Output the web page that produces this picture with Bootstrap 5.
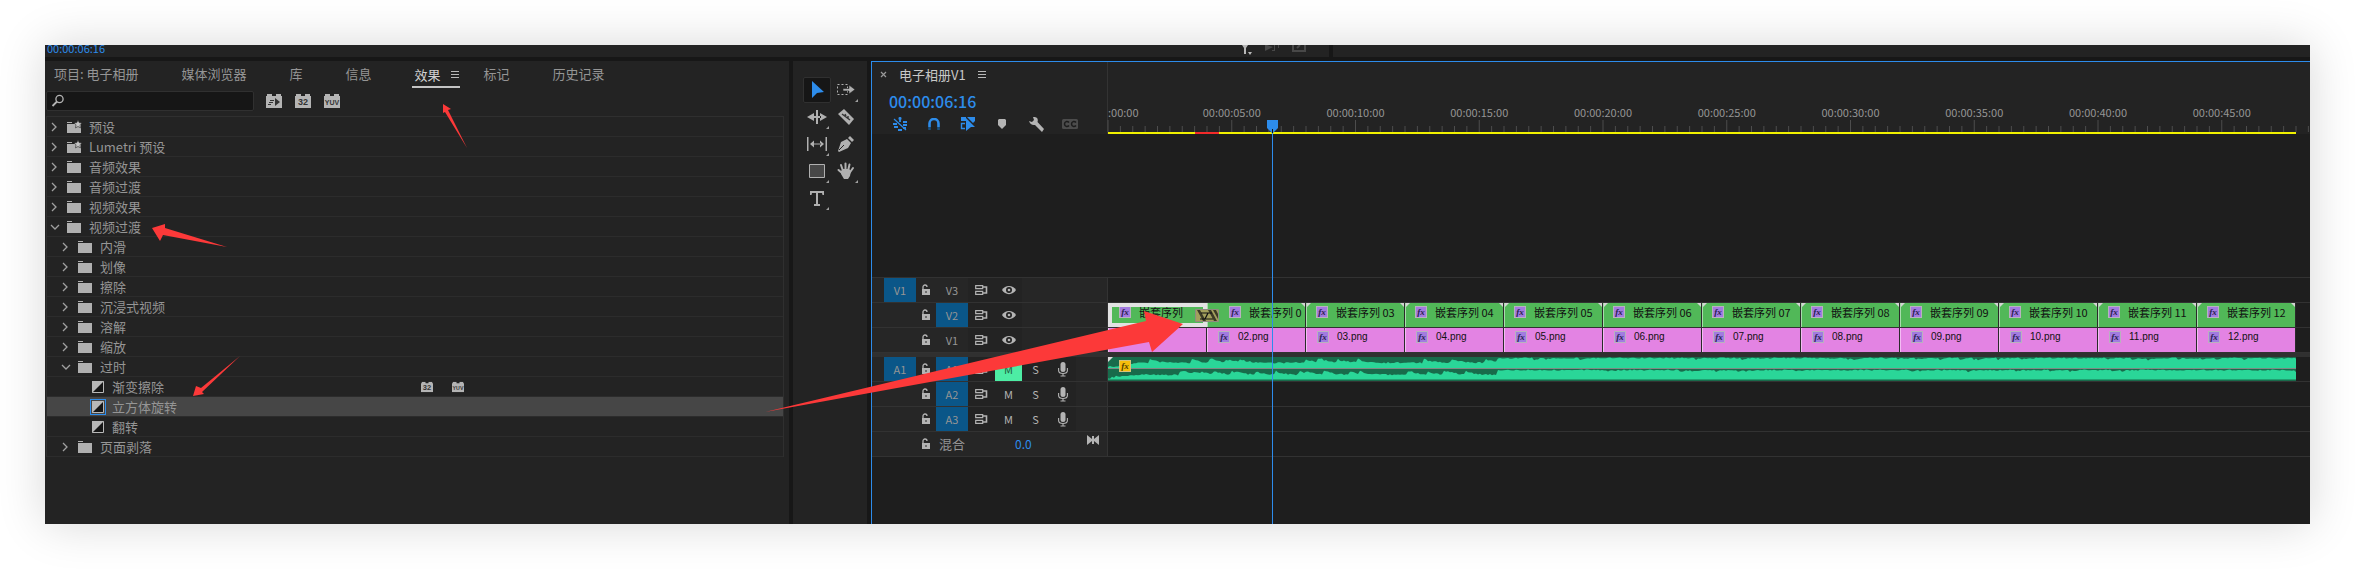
<!DOCTYPE html>
<html lang="zh-CN">
<head>
<meta charset="utf-8">
<meta name="viewport" content="width=device-width, initial-scale=1">
<title>电子相册V1</title>
<link href="https://cdn.jsdelivr.net/npm/bootstrap@5.3.0/dist/css/bootstrap.min.css" rel="stylesheet">
<style>
:root{--panel:#232323;--gap:#171717;--ink:#959595;--ico:#b0b0b0;--blue:#2d8ceb}
body{background:#fff;padding:45px;font-family:"Noto Sans CJK SC",sans-serif;font-size:13px;line-height:20px;color:var(--ink);font-weight:400}
button{background:none;border:0;padding:0;color:inherit;font:inherit;display:flex;align-items:center;justify-content:center}
a{color:inherit;text-decoration:none}
svg{display:block;flex:none}
.frame{background:var(--gap);min-height:calc(100vh - 90px);box-shadow:0 0 45px rgba(0,0,0,.16);position:relative}
.strip{height:12px;margin-bottom:4px;background:var(--panel)}
.strip-left{width:1282px}
.strip-time{color:var(--blue);font-size:11px;line-height:12px;padding-left:2px;margin-top:-3px}
.strip-icons{color:var(--ico)}
.strip-gap{width:4px;margin-left:2px;background:var(--gap)}
.work{gap:4px}
.pane{background:var(--panel)}
.effects{width:744px}
.tools{width:74px;padding:16px 10px}
.seq{border:solid var(--blue);border-width:1px 0 0 1px;background:#1e1e1e;min-width:0}
.tabs{height:30px;padding:2px 0 0 9px}
.tabs a{margin-right:43px;height:25px;line-height:22px}
.tabs a.on{color:#d0d0d0;border-bottom:2px solid #c4c4c4;margin-right:24px;padding:0 0 0 3px;margin-left:-3px}
.find{width:208px;height:20px;margin-left:1px;background:#161616;border:1px solid #303030;border-radius:2px;position:relative}
.find input{width:100%;height:18px;background:none;border:0;padding:0 8px 0 24px;color:#ccc;font-size:12px;outline:0}
.find svg{position:absolute;left:4px;top:2px}
.tree{margin:5px 5px 0 1px;border:solid #2f2f2f;border-width:1px 1px 0 1px}
.tree-row{height:20px;border-bottom:1px solid #2c2c2c;padding-left:3px}
.tree-row.picked{background:#464646}
.tree-row.l1{padding-left:14px}
.tree-row.l2{padding-left:43px}
.tree-row .nm{margin-left:7px;line-height:19px}
.tree-row .fx-name{width:309px;margin-left:6px;line-height:19px}
.fxi{padding:1px;border:1px solid transparent}
.picked .fxi{border-color:var(--blue)}
.tool-grid{display:grid;grid-template-columns:28px 28px;grid-auto-rows:27px;column-gap:1px}
.tool-grid button{position:relative;height:26px;color:var(--ico)}
.tool-grid button.on{background:#161616;border:1px solid #303030;border-radius:2px;color:var(--blue)}
.more::after{content:"";position:absolute;right:2px;bottom:1px;border:solid transparent;border-width:0 0 3px 3px;border-bottom-color:#a0a0a0}
.seq-head{background:var(--panel);height:72px}
.side{width:235px;flex:none}
.seq-name{color:#c8c8c8;height:25px;padding-left:8px}
.clock{color:var(--blue);font-size:16px;line-height:24px;padding-left:17px;font-weight:500;margin-top:2px}
.opts{padding-left:11px;margin-top:1px}
.opts button{width:34px;height:20px}
.ruler,.lane{flex:1 1 0;min-width:0;border-left:1px solid #333}
.span-all{width:calc(100% - 14px);position:relative}
.marks{padding-top:43px;font-size:11px;line-height:15px}
.marks span{width:10.4167%;text-align:center}
.marks span:first-child{width:5.2083%;text-align:left}
.bar{height:2px;background:#f0f000}
.bar i{display:block;height:2px;width:2.05%;margin-left:7.3%;background:#f22a2a}
.row-t{height:25px;border-bottom:1px solid #323232}
.row-t.first{margin-top:143px;border-top:1px solid #323232;height:26px}
.row-t .side{background:#262626;padding-left:12px;font-size:11px}
.row-t .side>*{height:24px;display:flex;align-items:center;justify-content:center}
.src{width:32px}.lk{width:20px}.tgt{width:32px}.syn{width:27px;background:#232323}.mb{width:27px;background:#232323}
.mb{color:#b4b4b4}
.lit{background:#0a5688}
.side .mute{background:#4deda4;color:#215c42}
.mix-name{font-size:13px;padding-left:3px}
.mix-level{color:var(--blue);font-size:12px;margin-left:50px}
.split{height:4px;background:#303030}
.lane .span-all{height:24px;display:grid;grid-template-columns:repeat(12,1fr)}
.clip{position:relative;height:24px;border-right:1px solid #2a2a2a;border-left:1px solid #a9dcad;background:#51b858;color:#111;font-size:11px;line-height:18px;padding-left:9px;white-space:nowrap;overflow:hidden}
.clip.still{background:#e383e3;border-left-color:#f3bdf3;padding-left:10px;font-family:"Liberation Sans","Noto Sans CJK SC",sans-serif;font-size:10px}
.clip.sel{border:4px solid #e2e2e2;padding:0 0 0 7px;line-height:10px}
.clip.second{padding-left:21px}
.clip .tag{margin:3px 8px 0 0}
.clip.sel .tag{margin-top:-1px}
.clip.cut::before{content:"";position:absolute;top:0;left:-1px;border:solid transparent;border-width:0 5px 5px 0;border-top:5px solid #d4d4d4;border-bottom:0}
.clip.cutr::after{content:"";position:absolute;top:0;right:-1px;border:5px solid transparent;border-right-width:0;border-top-color:#d4d4d4;border-bottom:0}
.tag{width:12px;height:12px;display:flex;align-items:center;justify-content:center;background:#a27be0;border:1px solid #b9b1bf;color:#2b1e50;font:italic 700 9px/10px "Liberation Serif",serif}
.tag.gold{background:#f5bd0c;color:#503d00;border-color:#d9c27a;position:absolute;left:11px;top:3px}
.crossing{position:absolute;left:7.35%;top:6px}
.playhead{position:absolute;top:58px;bottom:0;left:236px;right:14px;pointer-events:none}
.playhead i{position:absolute;left:13.83%;top:0;bottom:0;width:1px;background:var(--blue)}
.playhead svg{position:absolute;left:-5px;top:0}
.note{position:absolute;fill:#fc3939;pointer-events:none}
</style>
</head>
<body>
<svg width="0" height="0" class="position-absolute" aria-hidden="true">
<symbol id="right" viewBox="0 0 12 12"><path d="M2 2l4 4-4 4" fill="none" stroke="#a0a0a0" stroke-width="1.3"/></symbol>
<symbol id="down" viewBox="0 0 12 12"><path d="M1 4l4 4 4-4" fill="none" stroke="#a0a0a0" stroke-width="1.3"/></symbol>
<symbol id="folder" viewBox="0 0 16 14"><path d="M1 1h5v1H1zM1 3h14v10H1z" fill="#b0b0b0"/></symbol>
<symbol id="starfolder" viewBox="0 0 16 14"><path d="M1 2h5v1H1zM1 4h14v9H1z" fill="#b0b0b0"/><path d="M12 0l1.2 2.6 2.8.3-2 2 .5 3L12 6.500 9.500 7.900l.5-3-2-2 2.800-.3z" fill="#c4c4c4" stroke="#232323" stroke-width=".6"/></symbol>
<symbol id="wipe" viewBox="0 0 12 12"><path d="M.5.500h11v11H.5z" fill="#161616" stroke="#b8b8b8"/><path d="M0 0h12L0 12z" fill="#b8b8b8"/></symbol>
<symbol id="burger" viewBox="0 0 9 9"><path d="M0 1.500h8M0 4.500h8M0 7.500h8" stroke="#b8b8b8" stroke-width="1"/></symbol>
<symbol id="brick" viewBox="0 0 16 14"><path d="M0 2h1V0h5v2h4V0h5v2h1v12H0z" fill="#b4b4b4"/></symbol>
<symbol id="lock" viewBox="0 0 10 12"><path d="M2 5V3a2 2 0 0 1 4 0" fill="none" stroke="#b4b4b4" stroke-width="1.300"/><path d="M1 5h8v6H1z" fill="#b4b4b4"/><path d="M4.500 7h1v2h-1z" fill="#262626"/></symbol>
<symbol id="sync" viewBox="0 0 13 12"><path d="M.7 1.700h7v3h-7zM.7 7.300h7v3h-7z" fill="none" stroke="#b4b4b4" stroke-width="1.200"/><path d="M8 3h3.500v6H8" fill="none" stroke="#b4b4b4" stroke-width="1.600"/></symbol>
<symbol id="eye" viewBox="0 0 14 10"><path d="M0 5C3-.5 11-.5 14 5 11 10.500 3 10.500 0 5z" fill="#b4b4b4"/><circle cx="7" cy="5" r="3" fill="#232323"/><circle cx="7" cy="5" r="1.300" fill="#b4b4b4"/></symbol>
<symbol id="mic" viewBox="0 0 10 15"><rect x="2.500" y="0" width="5" height="10" rx="2.500" fill="#b4b4b4"/><path d="M.6 6v2.500q0 3 4.400 3t4.400-3V6M5 11.500V14M2.500 14h5" fill="none" stroke="#b4b4b4" stroke-width="1.100"/></symbol>
</svg>

<main class="frame d-flex flex-column">
  <div class="strip d-flex">
    <div class="strip-left d-flex"><div class="strip-time">00:00:06:16</div>
      <div class="strip-icons ms-auto me-2"><svg width="78" height="12" viewBox="0 0 78 12"><path d="M1 0h6L5 3v6H3V3z" fill="#b8b8b8"/><path d="M7 7h4l-2 3z" fill="#b8b8b8"/><path d="M24 0h2l6 2-8 4zM33 0h1v6h-3V5h2zM37 0h1v3h-1z" fill="#484848"/><path d="M52 0v6h12V0" fill="none" stroke="#484848" stroke-width="2"/><path d="M56 3l3-3" stroke="#484848" stroke-width="2"/></svg></div></div>
    <div class="strip-gap"></div>
  </div>
  <div class="work d-flex flex-grow-1">
    <section class="pane effects">
      <nav class="tabs d-flex">
        <a href="#">项目: 电子相册</a><a href="#">媒体浏览器</a><a href="#">库</a><a href="#">信息</a>
        <a href="#" class="on d-flex align-items-center">效果<svg class="ms-2" width="11" height="9"><use href="#burger" width="9" height="9" x="2"/></svg></a>
        <a href="#">标记</a><a href="#">历史记录</a>
      </nav>
      <div class="d-flex align-items-center">
        <label class="find"><svg width="14" height="14" viewBox="0 0 14 14"><circle cx="8.500" cy="5" r="3.600" fill="none" stroke="#b4b4b4" stroke-width="1.300"/><path d="M6 7.500L1.500 12" stroke="#b4b4b4" stroke-width="1.800"/></svg><input type="text" aria-label="搜索"></label>
        <div class="d-flex ms-1 ps-2" style="gap:13px">
          <button aria-label="加速效果"><svg width="16" height="14"><use href="#brick"/><path d="M9 4l5 4-5 4zM4 6h4v1H4zM3 8h4v1H3zM2 10h3v1H2z" fill="#333"/></svg></button>
          <button aria-label="32 位颜色"><svg width="16" height="14"><use href="#brick"/><text x="8" y="11" font-size="9" font-weight="700" font-family="Liberation Sans" text-anchor="middle" fill="#333">32</text></svg></button>
          <button aria-label="YUV 效果"><svg width="16" height="14"><use href="#brick"/><text x="8" y="11" font-size="7" font-weight="700" font-family="Liberation Sans" text-anchor="middle" fill="#333">YUV</text></svg></button>
        </div>
      </div>
      <div class="tree" id="tree"></div>
    </section>
    <section class="pane tools">
      <div class="tool-grid">
        <button class="on" aria-label="选择"><svg width="16" height="20" viewBox="0 0 16 20"><path d="M3 1l12 11-7 1-5 5z" fill="currentColor"/></svg></button>
        <button class="more" aria-label="向前选择轨道"><svg width="20" height="14" viewBox="0 0 20 14"><path d="M1.500 1.500h10v10h-10z" fill="none" stroke="currentColor" stroke-dasharray="2 2"/><path d="M7 5.500h6V2l6 4.500-6 4.500V8H7z" fill="currentColor" stroke="#232323" stroke-width=".6"/></svg></button>
        <button class="more" aria-label="波纹编辑"><svg width="20" height="14" viewBox="0 0 20 14"><path d="M0 7l7-4v8zM20 7l-7-4v8zM6 6h8v2H6zM9 0h2v14H9z" fill="currentColor"/></svg></button>
        <button aria-label="剃刀"><svg width="18" height="18" viewBox="0 0 18 18"><path d="M7 1l10 10-5 6L1 6z" fill="currentColor"/><path d="M5 6l8 6M8 6l1 2M11 8l0 3" stroke="#333" stroke-width="1.400"/></svg></button>
        <button class="more" aria-label="外滑"><svg width="20" height="14" viewBox="0 0 20 14"><path d="M0 0h1.500v14H0zM18.500 0H20v14h-1.500zM3 7l4-3.500v7zM17 7l-4-3.500v7zM6 6.400h8v1.200H6z" fill="currentColor"/></svg></button>
        <button aria-label="钢笔"><svg width="18" height="18" viewBox="0 0 18 18"><path d="M1 16L4 7l6-3 4 4-3 5-9 4zM11 3l2-2 4 4-2 2z" fill="currentColor"/><path d="M2 15l5-5" stroke="#232323"/></svg></button>
        <button class="more" aria-label="矩形"><svg width="16" height="14" viewBox="0 0 16 14"><path d="M.5.500h15v13H.5z" fill="#474747" stroke="currentColor"/></svg></button>
        <button class="more" aria-label="手形"><svg width="18" height="18" viewBox="0 0 18 18"><path d="M5 11L1.500 8M6 9L4 3M8.500 8.500V1.500M11 9l1.500-6.500M12.500 11L16 6" fill="none" stroke="currentColor" stroke-width="2" stroke-linecap="round"/><path d="M4 9l2-2h6l2 2-1 5-2 3H7L4 12z" fill="currentColor"/></svg></button>
        <button class="more" aria-label="文字"><svg width="14" height="15" viewBox="0 0 14 15"><path d="M0 0h14v4h-1.500L12 2H8v11h2v2H4v-2h2V2H2l-.5 2H0z" fill="currentColor"/></svg></button>
      </div>
    </section>
    <section class="seq flex-grow-1 position-relative">
      <div class="seq-head d-flex">
        <div class="side">
          <div class="seq-name d-flex align-items-center"><button aria-label="关闭"><svg width="7" height="7" viewBox="0 0 7 7"><path d="M1 1l5 5M6 1L1 6" stroke="#999" stroke-width="1.200"/></svg></button><span class="ms-2 ps-1 me-2">电子相册V1</span><svg class="ms-1" width="9" height="9"><use href="#burger"/></svg></div>
          <div class="clock">00:00:06:16</div>
          <div class="opts d-flex">
            <button aria-label="嵌套"><svg width="16" height="14" viewBox="0 0 16 14"><path d="M8 0v5M6.500 1.500h3M1 7h4M11 5h4M11 8h4M2 10h4M11 11h3M6 13h4" stroke="#2d8ceb" stroke-width="1.800"/><path d="M2 2l12 11" stroke="#2d8ceb" stroke-width="1.200"/></svg></button>
            <button aria-label="对齐"><svg width="12" height="13" viewBox="0 0 12 13"><path d="M1.500 9V5.500a4.500 4.500 0 0 1 9 0V9" fill="none" stroke="#2d8ceb" stroke-width="2.600"/><path d="M.2 9h2.600v3H.2zM9.200 9h2.600v3H9.200z" fill="#19507f"/></svg></button>
            <button aria-label="链接选择"><svg width="16" height="14" viewBox="0 0 16 14"><path d="M1 0h5v4H1zM7 0h8v4l-2 2z" fill="#2d8ceb"/><path d="M5 6.500H1.500v5H5" fill="none" stroke="#2d8ceb" stroke-width="1.400"/><path d="M6 1l9 9H11l-5 4z" fill="#2d8ceb"/></svg></button>
            <button aria-label="标记"><svg width="8" height="10" viewBox="0 0 8 10"><path d="M1 0h6l1 1v5l-4 4-4-4V1z" fill="#b4b4b4"/></svg></button>
            <button aria-label="设置"><svg width="15" height="15" viewBox="0 0 15 15"><path d="M0 4l3 1 2-2-1-3c4-.5 5.500 2 4.500 5L15 12l-2 3-7-7C3 8.500 1 7 0 4z" fill="#b4b4b4"/></svg></button>
            <button aria-label="字幕"><svg width="16" height="10" viewBox="0 0 16 10"><rect width="16" height="10" rx="1.500" fill="#4c4c4c"/><path d="M7 3.500Q6 2.300 4.500 2.500 2.500 3 2.500 5T4.500 7.500Q6 7.700 7 6.500M14 3.500Q13 2.300 11.500 2.500 9.500 3 9.500 5t2 2.500Q13 7.700 14 6.500" fill="none" stroke="#1c1c1c" stroke-width="1.500"/></svg></button>
          </div>
        </div>
        <div class="ruler">
          <div class="marks d-flex span-all" id="marks"></div>
          <svg class="span-all overflow-visible" height="12" id="ticks"></svg>
          <div class="bar span-all"><i></i></div>
        </div>
      </div>
      <div id="tracks"></div>
      <div class="playhead"><div class="position-relative h-100"><i><svg width="11" height="13" viewBox="0 0 11 13"><path d="M0 0h11v8l-5 5h-1L0 8z" fill="#2d8ceb"/><path d="M5 9h1v4H5z" fill="#111"/></svg></i></div></div>
    </section>
  </div>
  <svg class="note" style="left:397px;top:58px" width="27" height="45"><path d="M1 1l8 5-3 1 19 38L3 9l-2 1z"/></svg>
  <svg class="note" style="left:107px;top:178px" width="76" height="24"><path d="M0 5L13 1v4l62 19L11 12l-3 6z"/></svg>
  <svg class="note" style="left:148px;top:310px" width="48" height="42"><path d="M0 41l3-10 5 2L47 1 9 37l2 2z"/></svg>
  <svg class="note" style="left:720px;top:264px" width="420" height="106"><path d="M0 103L381 12l-2-10 39 13-31 28-3-10z"/></svg>
</main>

<script src="https://cdn.jsdelivr.net/npm/bootstrap@5.3.0/dist/js/bootstrap.bundle.min.js"></script>
<script>
const use=(id,w,h)=>`<svg width="${w}" height="${h}"><use href="#${id}"/></svg>`;
const tree=[[0,'预设','s'],[0,'Lumetri 预设','s'],[0,'音频效果'],[0,'音频过渡'],[0,'视频效果'],[0,'视频过渡','o'],[1,'内滑'],[1,'划像'],[1,'擦除'],[1,'沉浸式视频'],[1,'溶解'],[1,'缩放'],[1,'过时','o'],[2,'渐变擦除','b'],[2,'立方体旋转','p'],[2,'翻转'],[1,'页面剥落']];
const brick=(t,f)=>`<svg width="12" height="12" viewBox="0 0 16 14"><use href="#brick"/><text x="8" y="11" font-size="${f}" font-weight="700" font-family="Liberation Sans" text-anchor="middle" fill="#333">${t}</text></svg>`;
document.getElementById('tree').innerHTML=tree.map(([l,n,k])=>`<div class="tree-row d-flex align-items-center l${l} ${k==='p'?'picked':''}">`+
 (l===2?`<span class="fxi">${use('wipe',12,12)}</span><span class="fx-name">${n}</span>${k==='b'?`<span class="d-flex" style="gap:19px">${brick('32',10)}${brick('YUV',7)}</span>`:''}`
 :`${use(k==='o'?'down':'right',12,12)}<span class="ps-1">${use(k==='s'?'starfolder':'folder',16,14)}</span><span class="nm">${n}</span>`)+'</div>').join('');

const two=n=>String(n).padStart(2,'0');
document.getElementById('marks').innerHTML='<span>:00:00</span>'+Array.from({length:9},(_,i)=>`<span>00:00:${two(i*5+5)}:00</span>`).join('');
let t='';
for(let i=0;i<=97;i++){const x=i/96*100;t+=`<line x1="${x}%" x2="${x}%" y1="${i%10?6:0}" y2="12" stroke="#4d4d4d"/>`}
document.getElementById('ticks').innerHTML=t;

const tag='<span class="tag float-start">fx</span>';
const nest=Array.from({length:12},(_,i)=>`<div class="clip ${i===0?'sel':i===1?'second cutr':'cut cutr'}">${tag}嵌套序列${i===0?'':i===1?' 0':' '+two(i+1)}</div>`).join('')+
 `<svg class="crossing" width="24" height="13" viewBox="0 0 24 13"><path d="M.5.500h23v12H.5z" fill="#a3a05c" stroke="#8f8a80"/><path d="M2 1h3l6 11H8zM18 1h3l2 4v5zM13 1h3l6 11h-3z" fill="#3c3a26"/><path d="M6 4h7l-3 6h8M5 10h6M7 4h10" fill="none" stroke="#111" stroke-width="1.200"/></svg>`;
const stills=Array.from({length:12},(_,i)=>`<div class="clip still">${i?tag+two(i+1)+'.png':''}</div>`).join('');

/* two channels of a stereo waveform; quieter before x = 390 */
let seed=7;const rnd=()=>(seed=seed*16807%2147483647)/2147483647;
const chan=(base,top)=>{let d=`M0 ${base}`,dip=0;for(let x=0;x<=1188;x+=2){const soft=x<390;if(rnd()<(soft?.1:.05))dip=soft?4.500:2+rnd();dip*=soft?.78:.6;const intro=Math.max(0,7-x/4);const y=top+intro+(soft?5-dip+rnd()*1.500:.5+dip+rnd()*1.200);d+=`L${x} ${Math.min(base,y).toFixed(1)}`}return d+`L1188 ${base}z`};
const wave=`<svg class="position-absolute w-100" height="24" viewBox="0 0 1188 24" preserveAspectRatio="none"><path d="M0 0h1188v24H0z" fill="#186b4b"/><path d="${chan(11,0)}${chan(22.5,12)}" fill="#2ad698"/><path d="M0 11h1188v1H0z" fill="#7d8a84"/><path d="M0 0h5L0 5z" fill="#ddd"/></svg><span class="tag gold">fx</span>`;

const row=(o)=>`<div class="row-t d-flex ${o.first||''}"><div class="side d-flex"><span class="src ${o.src?'lit':''}">${o.src||''}</span><span class="lk">${use('lock',10,12)}</span>`+
 (o.mix?`<span class="mix-name">混合</span><span class="mix-level">0.0</span><span class="ms-auto me-2 pb-2"><svg width="12" height="10" viewBox="0 0 12 10"><path d="M0 0l5 4V1h2v3l5-4v10L7 6v3H5V6l-5 4z" fill="#b4b4b4"/></svg></span>`
 :`<span class="tgt ${o.on?'lit':''}">${o.name}</span><span class="syn">${use('sync',13,12)}</span>`+
 (o.name[0]==='V'?`<span class="mb">${use('eye',14,10)}</span>`:`<button class="mb ${o.mute?'mute':''}">M</button><button class="mb">S</button><button class="mb" aria-label="录音">${use('mic',10,15)}</button>`))+
 `</div><div class="lane">${o.body?`<div class="span-all">${o.body}</div>`:''}</div></div>`;
document.getElementById('tracks').innerHTML=
 row({first:'first',src:'V1',name:'V3'})+row({name:'V2',on:1,body:nest})+row({name:'V1',body:stills})+'<div class="split"></div>'+
 row({src:'A1',name:'A1',on:1,mute:1,body:wave})+row({name:'A2',on:1})+row({name:'A3',on:1})+row({mix:1});
</script>
</body>
</html>
